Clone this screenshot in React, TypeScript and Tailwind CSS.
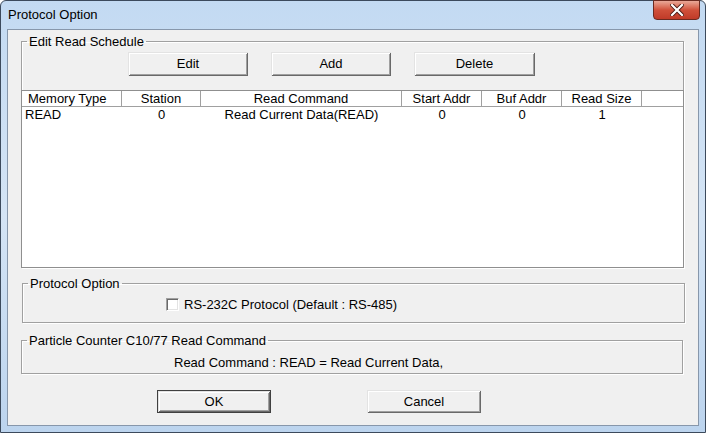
import React from 'react';

const font = { fontFamily: '"Liberation Sans", Arial, sans-serif' };

const btn =
  'bg-[#f0f0f0] text-black text-[13px] flex items-center justify-center shadow-[inset_1px_1px_0_#e3e3e3,inset_-1px_-1px_0_#696969,inset_2px_2px_0_#ffffff,inset_-2px_-2px_0_#a0a0a0]';

const columns = [
  { label: 'Memory Type', w: 'w-[100px]', align: 'justify-start pl-[6px]', value: 'READ', valueAlign: 'justify-start pl-[3px]' },
  { label: 'Station', w: 'w-[79px]', align: 'justify-center', value: '0', valueAlign: 'justify-center' },
  { label: 'Read Command', w: 'w-[201px]', align: 'justify-center', value: 'Read Current Data(READ)', valueAlign: 'justify-center' },
  { label: 'Start Addr', w: 'w-[80px]', align: 'justify-center', value: '0', valueAlign: 'justify-center' },
  { label: 'Buf Addr', w: 'w-[80px]', align: 'justify-center', value: '0', valueAlign: 'justify-center' },
  { label: 'Read Size', w: 'w-[80px]', align: 'justify-center', value: '1', valueAlign: 'justify-center' },
];

const groupBorder =
  'border border-[#a0a0a0] shadow-[inset_1px_1px_0_#ffffff,1px_1px_0_#ffffff]';

export default function App() {
  return (
    <div style={font} className="w-[706px] h-[433px] overflow-hidden bg-white">
      <div className="relative w-[706px] h-[433px] rounded-t-[6px] border border-[#3c4a5c] bg-gradient-to-b from-[#c3daf2] via-[#d4e4f5] to-[#bcd4ee] flex flex-col">
        {/* title bar */}
        <div className="h-[28px] flex items-center pl-[7px] text-[13px] text-black">Protocol Option</div>
        <div className="absolute top-[-1px] right-[5px] w-[47px] h-[20px] rounded-b-[4px] border border-[#6b2a20] bg-gradient-to-b from-[#e8a898] via-[#d0503a] to-[#c03a28] flex items-center justify-center">
          <svg width="14" height="12" viewBox="0 0 14 12">
            <path d="M2 1 L12 11 M12 1 L2 11" stroke="#4a1a14" strokeWidth="4" strokeLinecap="square" />
            <path d="M2 1 L12 11 M12 1 L2 11" stroke="#ffffff" strokeWidth="2.2" strokeLinecap="square" />
          </svg>
        </div>

        {/* client area */}
        <div className="ml-[6px] w-[692px] h-[397px] border border-[#8797ab] bg-[#f0f0f0] flex flex-col text-[13px] text-black">
          {/* Edit Read Schedule */}
          <fieldset className={`ml-[13px] mt-[4px] w-[663px] ${groupBorder} flex flex-col`}>
            <legend className="ml-[5px] px-[2px] leading-[15px]">Edit Read Schedule</legend>
            <div className="flex pt-[3px] pl-[106px] gap-[23px]">
              <button className={`${btn} w-[120px] h-[24px]`}>Edit</button>
              <button className={`${btn} w-[120px] h-[24px]`}>Add</button>
              <button className={`${btn} w-[121px] h-[24px]`}>Delete</button>
            </div>
            <div className="mt-[14px] -mx-[1px] -mb-[1px] h-[178px] bg-white border border-[#8f8f8f] flex flex-col">
              <div className="flex h-[16px] border-b border-[#a0a0a0] bg-white">
                {columns.map((c) => (
                  <div key={c.label} className={`${c.w} flex items-center ${c.align} border-r border-[#a0a0a0] leading-[15px]`}>
                    {c.label}
                  </div>
                ))}
              </div>
              <div className="flex h-[15px]">
                {columns.map((c) => (
                  <div key={c.label} className={`${c.w} flex items-center ${c.valueAlign} leading-[15px]`}>
                    {c.value}
                  </div>
                ))}
              </div>
            </div>
          </fieldset>

          {/* Protocol Option */}
          <fieldset className={`ml-[14px] mt-[8px] w-[663px] ${groupBorder}`}>
            <legend className="ml-[5px] px-[2px] leading-[15px]">Protocol Option</legend>
            <div className="flex items-center pt-[6px] pb-[10px] pl-[143px]">
              <div className="w-[13px] h-[13px] bg-white border border-t-[#a0a0a0] border-l-[#a0a0a0] border-b-[#ffffff] border-r-[#ffffff] shadow-[inset_1px_1px_0_#696969,inset_-1px_-1px_0_#e3e3e3]" />
              <span className="ml-[5px] leading-[15px]">RS-232C Protocol (Default : RS-485)</span>
            </div>
          </fieldset>

          {/* Particle Counter */}
          <fieldset className={`ml-[13px] mt-[10px] w-[662px] ${groupBorder}`}>
            <legend className="ml-[5px] px-[2px] leading-[15px]">Particle Counter C10/77 Read Command</legend>
            <div className="pt-[7px] pb-[3px] pl-[152px] leading-[15px]">Read Command : READ = Read Current Data,</div>
          </fieldset>

          {/* OK / Cancel */}
          <div className="flex mt-[16px] pl-[149px] gap-[96px]">
            <button className={`${btn} w-[114px] h-[23px] border border-[#404040]`}>OK</button>
            <button className={`${btn} w-[114px] h-[23px]`}>Cancel</button>
          </div>
        </div>
      </div>
    </div>
  );
}
